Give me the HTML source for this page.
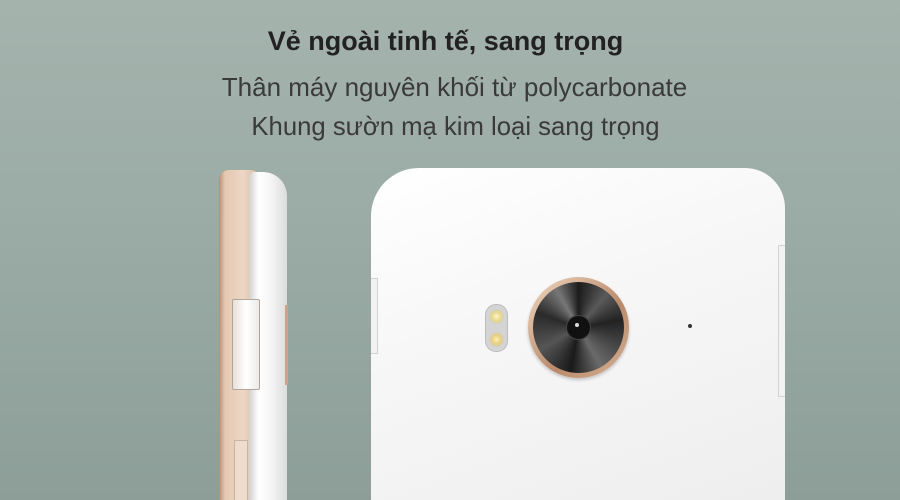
<!DOCTYPE html>
<html><head><meta charset="utf-8"><style>
html,body{margin:0;padding:0;width:900px;height:500px;overflow:hidden}
body{position:relative;background:linear-gradient(180deg,#a5b3ad 0%,#97a8a2 60%,#8d9e98 100%);font-family:"Liberation Sans","DejaVu Sans",sans-serif;color:#2b2b2b}
.t{position:absolute;left:0;width:893px;text-align:center;white-space:nowrap}
.abs{position:absolute}
</style></head><body>
<div class="t" style="top:26px;font-size:27px;font-weight:bold;color:#222;left:-1px">Vẻ ngoài tinh tế, sang trọng</div>
<div class="t" style="top:72px;font-size:26px;left:8px;color:#3a3a3a">Thân máy nguyên khối từ polycarbonate</div>
<div class="t" style="top:113px;font-size:25.7px;left:9px;color:#3a3a3a">Khung sườn mạ kim loại sang trọng</div>

<!-- side phone -->
<div class="abs" style="left:219px;top:170px;width:40px;height:330px;border-radius:10px 8px 0 0;background:linear-gradient(90deg,#b58e72 0%,#e5c9b2 15%,#ecd6c4 60%,#d9bba3 100%)"></div>
<div class="abs" style="left:249px;top:172px;width:38px;height:328px;border-radius:6px 24px 0 0;background:linear-gradient(90deg,#cfd0d0 0%,#ffffff 25%,#f4f4f4 60%,#dcdcdc 100%)"></div>
<div class="abs" style="left:285px;top:305px;width:3px;height:80px;background:#c9a488"></div>
<div class="abs" style="left:232px;top:299px;width:26px;height:89px;border:1px solid #b3a59a;border-radius:2px;background:linear-gradient(90deg,#e8e0d8,#ffffff 50%,#ecebe9)"></div>
<div class="abs" style="left:234px;top:440px;width:12px;height:60px;border:1px solid #c9b4a2;border-bottom:none;background:#efdccc"></div>

<!-- back phone -->
<div class="abs" style="left:371px;top:168px;width:414px;height:332px;border-radius:48px 40px 0 0;background:linear-gradient(160deg,#ffffff 0%,#f7f7f7 40%,#eeeeee 100%)"></div>
<div class="abs" style="left:371px;top:278px;width:6px;height:74px;border:1px solid #d2d2d2;border-left:none;background:#f2f2f2"></div>
<div class="abs" style="left:778px;top:245px;width:6px;height:150px;border:1px solid #d2d2d2;border-right:none;background:#f2f2f2"></div>
<div class="abs" style="left:688px;top:324px;width:4px;height:4px;border-radius:50%;background:#333"></div>
<!-- flash -->
<div class="abs" style="left:485px;top:304px;width:23px;height:48px;border-radius:11px;background:#d4d4d4;border:1px solid #bcbcbc;box-sizing:border-box"></div>
<div class="abs" style="left:489px;top:309px;width:15px;height:15px;border-radius:50%;background:radial-gradient(circle,#fff6c8 0%,#e8d98c 40%,#d0cfc6 75%)"></div>
<div class="abs" style="left:489px;top:332px;width:15px;height:15px;border-radius:50%;background:radial-gradient(circle,#fff0b8 0%,#e8d080 40%,#d0cfc6 75%)"></div>
<!-- camera -->
<div class="abs" style="left:528px;top:277px;width:101px;height:101px;border-radius:50%;background:linear-gradient(135deg,#f0d7c0,#b98a6a 60%,#d8b395);box-shadow:0 2px 3px rgba(0,0,0,.2)"></div>
<div class="abs" style="left:533px;top:282px;width:91px;height:91px;border-radius:50%;background:conic-gradient(from 0deg,#1c1c1c,#5a5a5a 40deg,#222 80deg,#6a6a6a 150deg,#1a1a1a 190deg,#555 240deg,#2a2a2a 290deg,#777 330deg,#1c1c1c)"></div>
<div class="abs" style="left:566px;top:315px;width:25px;height:25px;border-radius:50%;background:#111;border:1px solid #444;box-sizing:border-box"></div>
<div class="abs" style="left:575px;top:323px;width:4px;height:4px;border-radius:50%;background:#ddd"></div>
</body></html>
